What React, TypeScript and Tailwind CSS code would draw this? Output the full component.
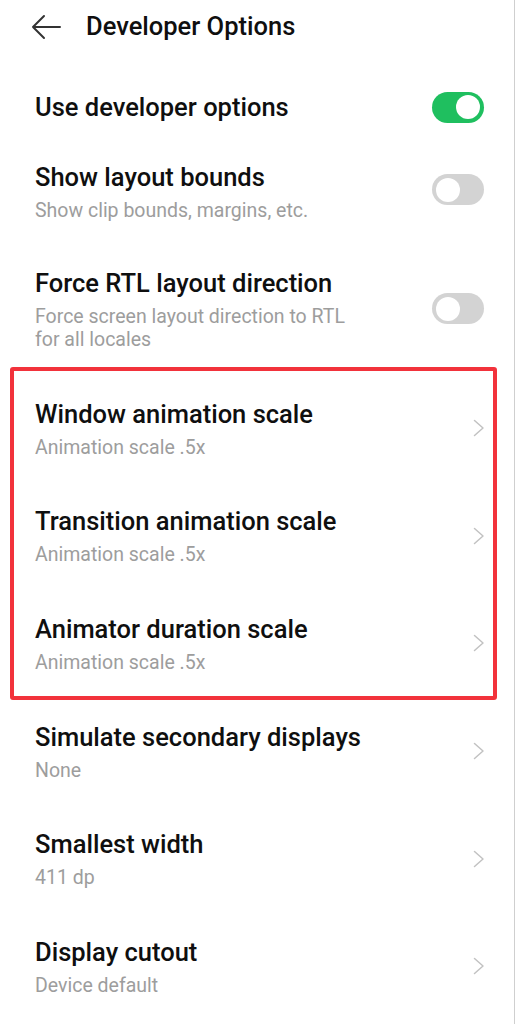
type Row = {
  title: string;
  sub: string;
};

const animRows: Row[] = [
  { title: "Window animation scale", sub: "Animation scale .5x" },
  { title: "Transition animation scale", sub: "Animation scale .5x" },
  { title: "Animator duration scale", sub: "Animation scale .5x" },
];

const bottomRows: Row[] = [
  { title: "Simulate secondary displays", sub: "None" },
  { title: "Smallest width", sub: "411 dp" },
  { title: "Display cutout", sub: "Device default" },
];

function Toggle({ on, className = "" }: { on: boolean; className?: string }) {
  return (
    <div
      className={`w-[52px] h-[31px] rounded-full flex items-center px-[4px] shrink-0 ${
        on ? "bg-[#1fbf5f] justify-end" : "bg-[#d3d3d3] justify-start"
      } ${className}`}
    >
      <div className="w-[24px] h-[24px] rounded-full bg-white" />
    </div>
  );
}

function Chevron() {
  return (
    <svg width="12" height="18" viewBox="0 0 12 18" fill="none" className="shrink-0 mb-[5px]">
      <path d="M1.5 1.5L10 9L1.5 16.5" stroke="#c2c2c2" strokeWidth="1.5" strokeLinecap="round" strokeLinejoin="round" />
    </svg>
  );
}

function NavRow({ row }: { row: Row }) {
  return (
    <div className="h-[107.5px] flex items-center justify-between">
      <div className="flex flex-col">
        <span className="text-[25.5px] leading-[33px] font-medium text-[#0f0f0f]">{row.title}</span>
        <span className="text-[19.5px] leading-[33px] text-[#9d9d9d]">{row.sub}</span>
      </div>
      <Chevron />
    </div>
  );
}

export default function App() {
  return (
    <div
      className="w-[515px] min-h-[1024px] bg-white border-r border-[#cfcfcf] flex flex-col"
      style={{ fontFamily: "Roboto, 'Noto Sans', sans-serif" }}
    >
      {/* Header */}
      <div className="h-[50px] flex items-center pt-[3px]">
        <svg width="30" height="26" viewBox="0 0 30 26" fill="none" className="ml-[31px] mr-[25px]">
          <path d="M29 13H2M13 2L2 13L13 24" stroke="#333" strokeWidth="2" strokeLinecap="round" strokeLinejoin="round" />
        </svg>
        <h1 className="text-[25.5px] font-medium text-[#0f0f0f]">Developer Options</h1>
      </div>

      {/* Switch rows */}
      <div className="flex flex-col pl-[35px] pr-[30px]">
        <div className="h-[110px] flex items-center justify-between pt-[4px]">
          <span className="text-[25.5px] font-medium text-[#0f0f0f]">Use developer options</span>
          <Toggle on />
        </div>
        <div className="h-[107px] flex items-start justify-between pt-[1px]">
          <div className="flex flex-col">
            <span className="text-[25.5px] leading-[33px] font-medium text-[#0f0f0f]">Show layout bounds</span>
            <span className="text-[19.5px] leading-[33px] text-[#9d9d9d]">Show clip bounds, margins, etc.</span>
          </div>
          <Toggle on={false} className="mt-[13px]" />
        </div>
        <div className="h-[100px] flex items-start justify-between">
          <div className="flex flex-col">
            <span className="text-[25.5px] leading-[33px] font-medium text-[#0f0f0f]">Force RTL layout direction</span>
            <span className="text-[19.5px] leading-[23px] text-[#9d9d9d] mt-[5px]">Force screen layout direction to RTL</span>
            <span className="text-[19.5px] leading-[23px] text-[#9d9d9d]">for all locales</span>
          </div>
          <Toggle on={false} className="mt-[26px]" />
        </div>
      </div>

      {/* Highlighted animation rows */}
      <div className="ml-[10px] w-[487px] h-[333px] border-[4px] border-[#f2323b] rounded-[3px] flex flex-col pl-[21px] pr-[8px]">
        {animRows.map((row) => (
          <div key={row.title} className="h-[107.5px] flex items-center justify-between pt-[12px]">
            <div className="flex flex-col">
              <span className="text-[25.5px] leading-[33px] font-medium text-[#0f0f0f]">{row.title}</span>
              <span className="text-[19.5px] leading-[33px] text-[#9d9d9d]">{row.sub}</span>
            </div>
            <Chevron />
          </div>
        ))}
      </div>

      {/* Remaining rows */}
      <div className="flex flex-col pl-[35px] pr-[29px]">
        {bottomRows.map((row) => (
          <NavRow key={row.title} row={row} />
        ))}
      </div>
    </div>
  );
}
